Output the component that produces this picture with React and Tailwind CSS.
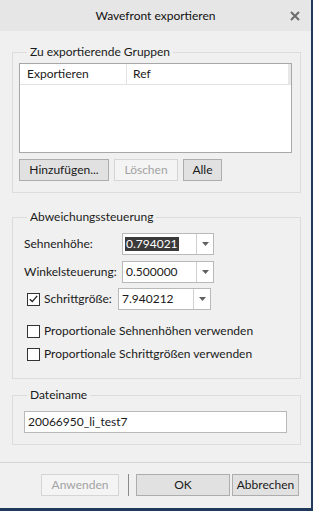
const Arrow = () => (
  <svg width="7" height="4" viewBox="0 0 7 4">
    <path d="M0 0 H7 L3.5 4 Z" fill="#606060" />
  </svg>
);

const Combo = ({ value, selected, className }) => (
  <div className={`flex h-[22px] border border-[#b9b9b9] bg-white ${className}`}>
    <div className="flex flex-1 items-center pl-[2px]">
      <span className={selected ? 'bg-[#3a3a3a] text-white px-[1px] leading-[14px]' : 'px-[1px]'}>{value}</span>
    </div>
    <div className="flex w-[17px] items-center justify-center border-l border-[#d0d0d0]">
      <Arrow />
    </div>
  </div>
);

const Check = ({ checked }) => (
  <div className="flex h-[13px] w-[13px] items-center justify-center border border-[#333] bg-white">
    {checked && (
      <svg width="9" height="8" viewBox="0 0 9 8">
        <path d="M0.8 4.2 L3.3 6.6 L8.2 0.9" stroke="#222" strokeWidth="1.4" fill="none" />
      </svg>
    )}
  </div>
);

const Btn = ({ children, disabled, className }) => (
  <button
    className={`flex h-[22px] items-center justify-center border ${
      disabled ? 'border-[#d5d5d5] bg-[#f4f4f4] text-[#a3a3a3]' : 'border-[#adadad] bg-[#e1e1e1] text-[#1a1a1a]'
    } ${className}`}
  >
    {children}
  </button>
);

const Group = ({ title, className, children }) => (
  <fieldset className={`mx-[12px] w-[289px] border border-[#dcdcdc] ${className}`}>
    <legend className="ml-[14px] px-[3px] leading-[16px]">{title}</legend>
    {children}
  </fieldset>
);

export default function App() {
  return (
    <div className="flex h-[511px] w-[313px] flex-col border-r-2 border-b-[3px] border-[#1f3a5b] bg-[#f0f0f0] font-['Segoe_UI','Lato',sans-serif] text-[12px] text-[#1a1a1a]">
      <div className="relative flex h-[31px] shrink-0 items-center justify-center bg-[#e6e6e6] text-[12px] text-[#111]">
        Wavefront exportieren
        <svg className="absolute right-[11px] top-[11px]" width="10" height="10" viewBox="0 0 10 10">
          <path d="M1 1 L9 9 M9 1 L1 9" stroke="#6b6b6b" strokeWidth="2" />
        </svg>
      </div>

      <Group title="Zu exportierende Gruppen" className="mt-[13px] pb-[11px]">
        <div className="ml-[6px] mt-[3px] flex h-[90px] w-[273px] flex-col border border-[#a8a8a8] bg-white">
          <div className="flex h-[21px] border-b border-[#e3e3e3]">
            <div className="flex w-[107px] items-center border-r border-[#e3e3e3] pl-[7px]">Exportieren</div>
            <div className="flex flex-1 items-center pl-[6px]">Ref</div>
            <div className="w-[3px] bg-[#e8e8e8]" />
          </div>
        </div>
        <div className="ml-[6px] mt-[6px] flex gap-[5px]">
          <Btn className="w-[90px]">Hinzufügen...</Btn>
          <Btn disabled className="w-[64px]">Löschen</Btn>
          <Btn className="w-[39px]">Alle</Btn>
        </div>
      </Group>

      <Group title="Abweichungssteuerung" className="mt-[16px] pb-[16px]">
        <div className="mt-[8px] flex h-[22px] items-center">
          <span className="ml-[11px] w-[98px]">Sehnenhöhe:</span>
          <Combo value="0.794021" selected className="w-[92px]" />
        </div>
        <div className="mt-[6px] flex h-[22px] items-center">
          <span className="ml-[11px] w-[98px]">Winkelsteuerung:</span>
          <Combo value="0.500000" className="w-[92px]" />
        </div>
        <div className="mt-[5px] flex h-[22px] items-center">
          <div className="ml-[14px]">
            <Check checked />
          </div>
          <span className="ml-[4px] w-[74px]">Schrittgröße:</span>
          <Combo value="7.940212" className="w-[93px]" />
        </div>
        <div className="ml-[14px] mt-[13px] flex h-[16px] items-center gap-[4px]">
          <Check />
          <span>Proportionale Sehnenhöhen verwenden</span>
        </div>
        <div className="ml-[14px] mt-[7px] flex h-[16px] items-center gap-[4px]">
          <Check />
          <span>Proportionale Schrittgrößen verwenden</span>
        </div>
      </Group>

      <Group title="Dateiname" className="mt-[8px] pb-[11px]">
        <div className="ml-[11px] mt-[8px] flex h-[22px] w-[263px] items-center border border-[#b9b9b9] bg-white pl-[3px]">
          20066950_li_test7
        </div>
      </Group>

      <div className="mt-[17px] h-px w-full bg-[#d4d4d4]" />

      <div className="mt-[11px] flex items-center pl-[41px]">
        <Btn disabled className="w-[78px]">Anwenden</Btn>
        <div className="ml-[9px] h-[22px] w-px bg-[#8a8a8a]" />
        <Btn className="ml-[7px] w-[94px]">OK</Btn>
        <Btn className="ml-[2px] w-[67px]">Abbrechen</Btn>
      </div>
    </div>
  );
}
